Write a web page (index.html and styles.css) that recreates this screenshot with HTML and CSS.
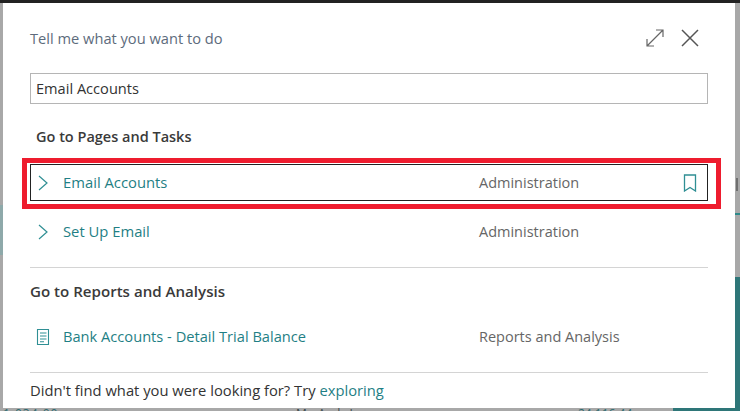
FILE: index.html
```html
<!DOCTYPE html>
<html lang="en">
<head>
<meta charset="utf-8">
<title>Tell me what you want to do</title>
<link rel="stylesheet" href="styles.css">
</head>
<body>
<div class="backdrop">
  <span class="bg-text bg-amount-left">1,034.00</span>
  <span class="bg-text bg-name">Mr. Andy Lee</span>
  <span class="bg-text bg-amount-right">24,116.44</span>
  <span class="bg-tile"></span>
  <span class="bg-left-band"></span>
  <span class="bg-right-mark"></span>
  <span class="bg-right-slot"></span>
  <span class="bg-right-tile"></span>
  <main class="modal">
    <header class="head">
      <h1 class="title">Tell me what you want to do</h1>
      <div class="head-actions">
        <svg class="icon-expand" width="18" height="18" viewBox="0 0 18 18" fill="none" stroke="#666" stroke-width="1.2"><path d="M1 17 17 1M10 1H17V8M1 10V17H8"/></svg>
        <svg class="icon-close" width="18" height="18" viewBox="0 0 18 18" fill="none" stroke="#555" stroke-width="1.500"><path d="M1 1 17 17M17 1 1 17"/></svg>
      </div>
    </header>
    <div class="search">Email Accounts</div>
    <h2 class="group-title group-pages">Go to Pages and Tasks</h2>
    <div class="row row-focus">
      <svg class="row-icon" width="12" height="18" viewBox="0 0 12 18" fill="none" stroke="#2f8f94" stroke-width="1.200"><path d="M2 2 10 9 2 16"/></svg>
      <a class="row-name">Email Accounts</a>
      <span class="row-cat">Administration</span>
      <svg class="row-mark" width="14" height="18" viewBox="0 0 14 18" fill="none" stroke="#2f8f94" stroke-width="1.300"><path d="M1.500 1H12.500V17L7 13.500 1.500 17Z"/></svg>
    </div>
    <div class="row">
      <svg class="row-icon" width="12" height="18" viewBox="0 0 12 18" fill="none" stroke="#2f8f94" stroke-width="1.200"><path d="M2 2 10 9 2 16"/></svg>
      <a class="row-name">Set Up Email</a>
      <span class="row-cat">Administration</span>
    </div>
    <hr class="rule rule-first">
    <h2 class="group-title group-reports">Go to Reports and Analysis</h2>
    <div class="row row-report">
      <svg class="row-icon" width="14" height="18" viewBox="0 0 14 18" fill="none" stroke="#2f8f94" stroke-width="1.100"><path d="M1.500 1.500H12.500V16.500H1.500ZM4 5H10.500M4 8H10.500M4 11H10.500M4 13.800H8"/></svg>
      <a class="row-name">Bank Accounts - Detail Trial Balance</a>
      <span class="row-cat">Reports and Analysis</span>
    </div>
    <hr class="rule rule-last">
    <p class="foot">Didn't find what you were looking for? Try <a class="foot-link">exploring</a></p>
    <div class="callout"></div>
  </main>
</div>
</body>
</html>
```
FILE: styles.css
```css
* { box-sizing: border-box; }
html, body { margin: 0; height: 100%; }
body { background: #a3a3a3; font-family: "Open Sans", "Noto Sans", sans-serif; overflow: hidden; }
.backdrop { position: relative; width: 740px; height: 411px; background: #a8a8a8; border-top: 3px solid #222; padding-left: 3px; overflow: hidden; }
.bg-text { position: absolute; top: 404px; font-size: 12px; line-height: 14px; }
.bg-amount-left { left: 3px; color: #2c6a6e; letter-spacing: 1px; }
.bg-name { left: 296px; color: #3c4a4c; }
.bg-amount-right { left: 578px; color: #2c6a6e; }
.bg-tile { position: absolute; left: 673px; bottom: 0; width: 67px; height: 3px; background: #2e7678; }
.bg-left-band { position: absolute; left: 0; top: 202px; width: 3px; height: 50px; background: #8ea9aa; }
.bg-right-mark { position: absolute; left: 735px; top: 210px; width: 5px; height: 2px; background: #2e8a8a; }
.bg-right-slot { position: absolute; left: 736px; top: 175px; width: 2px; height: 13px; background: #6f6f6f; }
.bg-right-tile { position: absolute; left: 735px; top: 274px; width: 5px; height: 134px; background: #2e7678; }
.modal { position: relative; width: 732px; height: 405px; background: #fff; padding: 0 27px; color: #333; }
.head { display: flex; align-items: center; justify-content: space-between; height: 70px; }
.title { margin: 0; font-size: 14.650px; font-weight: 400; color: #5d6b7c; line-height: 20px; }
.head-actions { display: flex; align-items: center; gap: 17px; margin-right: 9px; }
.search { height: 31px; border: 1px solid #b5b5b5; padding: 0 5px; font-size: 14.600px; line-height: 29px; color: #333; }
.group-title { margin: 0; font-weight: 600; color: #3a3a3a; line-height: 20px; }
.group-pages { height: 60px; padding: 23px 0 0 6px; font-size: 14.500px; }
.group-reports { height: 50px; padding-top: 13px; font-size: 15.100px; }
.row { display: flex; align-items: center; height: 37px; padding-left: 6px; border: 1px solid transparent; font-size: 14.500px; }
.row + .row { margin-top: 12px; }
.row-focus { border-color: #222; }
.row-icon { flex: none; }
.row-name { margin: 0 0 2px 14px; color: #1f7f85; width: 416px; font-size: 14.800px; white-space: nowrap; }
.row-cat { color: #666; flex: 1; }
.row-mark { margin-right: 10px; }
.rule { border: 0; border-top: 1px solid #d4d4d4; margin: 0; }
.rule-first { margin-top: 17px; }
.row-report .row-icon { margin-left: -1px; }
.row-report .row-name { margin-left: 13px; font-size: 14.650px; }
.rule-last { margin-top: 17px; }
.foot { margin: 0; font-size: 14.750px; line-height: 20px; padding-top: 7px; color: #333; }
.foot-link { color: #1f7f85; }
.callout { position: absolute; left: 19px; top: 155px; width: 699px; height: 51px; border: 5px solid #ee1c2e; }
```
